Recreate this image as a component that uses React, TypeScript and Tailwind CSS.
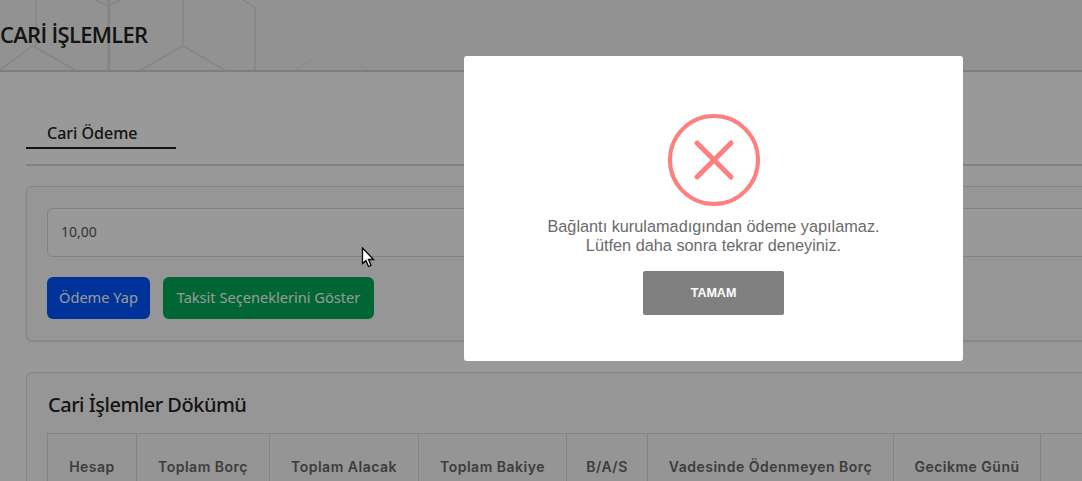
export default function App() {
  const heads: [string, string][] = [
    ["Hesap", "w-[89px]"],
    ["Toplam Borç", "w-[133px]"],
    ["Toplam Alacak", "w-[149px]"],
    ["Toplam Bakiye", "w-[148px]"],
    ["B/A/S", "w-[81px]"],
    ["Vadesinde Ödenmeyen Borç", "w-[246px]"],
    ["Gecikme Günü", "w-[147px]"],
  ];
  return (
    <div className="relative h-[481px] w-[1082px] overflow-hidden bg-white font-['Noto_Sans',sans-serif]">
      <header className="relative flex h-[72px] items-center border-b-2 border-[#d2d2d2] bg-[#f4f4f4] pb-[3px]">
        <svg className="absolute inset-0 h-[70px] w-[500px]" viewBox="0 0 500 70" fill="none" stroke="#dedede" strokeWidth="1.5">
          <path d="M0 70L33 46L75 70M36 0V46M108 0V70M109.5 0V70M183 0V46L141 70M183 46L225 70M243 0L255 8V70M95 0L108 6L120 0" />
          <path d="M295 70L312 60M356 60L366 70" stroke="#ebebeb" />
        </svg>
        <h1 className="relative text-[22px] leading-none font-semibold tracking-[-0.7px] text-[#222] font-['Open_Sans',sans-serif]">CARİ İŞLEMLER</h1>
      </header>
      <main className="pl-[26px]">
        <div className="mt-[49px] w-[1056px] border-b-2 border-[#d6d6d6] pb-[15px]">
          <div className="w-[150px] border-b-2 border-[#222] pb-[1px] pl-[21px] text-[16px] leading-[25px] font-medium text-[#222]">Cari Ödeme</div>
        </div>
        <section className="mt-[20px] h-[155px] w-[1100px] rounded-md border border-[#dedede] bg-[#fbfbfb] px-[20px] pt-[21px] shadow-sm">
          <div className="flex h-[49px] items-center rounded-md border border-[#d8d8d8] bg-white pb-[2px] pl-[13px] text-[14px] text-[#555]">10,00</div>
          <div className="mt-[20px] flex gap-[13px]">
            <button className="h-[42px] w-[103px] rounded-md bg-[#0055ff] text-[14.6px] text-white">Ödeme Yap</button>
            <button className="h-[42px] w-[211px] rounded-md bg-[#00aa55] text-[14.6px] text-white">Taksit Seçeneklerini Göster</button>
          </div>
        </section>
        <section className="mt-[31px] w-[1100px] rounded-md border border-[#dedede] bg-[#fbfbfb] px-[20px] pt-[18px]">
          <h2 className="pl-[1px] text-[20px] leading-[28px] font-medium tracking-[-0.5px] text-[#222]">Cari İşlemler Dökümü</h2>
          <div className="mt-[14px] flex h-[80px] border-t border-l border-[#dcdcdc] bg-[#f8f8f8]">
            {heads.map(([t, w]) => (
              <div key={t} className={`${w} border-r border-[#dcdcdc] pt-[22px] text-center font-['Inter',sans-serif] text-[14px] font-semibold tracking-[0.5px] text-[#666]`}>{t}</div>
            ))}
          </div>
        </section>
      </main>
      <div className="absolute inset-0 bg-black/40" />
      <div className="absolute top-[56px] left-[464px] flex h-[305px] w-[499px] flex-col items-center rounded-[3px] bg-white pt-[58px] font-['Liberation_Sans',sans-serif]">
        <svg width="92" height="92" viewBox="0 0 92 92" fill="none" stroke="#ff7f7f" strokeLinecap="round">
          <circle cx="46" cy="46" r="44" strokeWidth="4" />
          <path d="M29 29L63 63M63 29L29 63" strokeWidth="5" />
        </svg>
        <p className="mt-[11px] text-center text-[16.3px] leading-[19px] text-[#6a6a6a]">
          Bağlantı kurulamadıgından ödeme yapılamaz.<br />Lütfen daha sonra tekrar deneyiniz.
        </p>
        <button className="mt-[16px] h-[44px] w-[141px] rounded-[2px] bg-[#808080] text-[12.5px] font-bold text-white">TAMAM</button>
      </div>
      <svg className="absolute top-[247px] left-[361px]" width="15" height="21" viewBox="0 0 15 21">
        <path d="M1.5 1V16.5L5 13.5L7.5 19.5L10 18.5L7.5 12.5H12.5Z" fill="#fff" stroke="#000" strokeWidth="1.3" />
      </svg>
    </div>
  );
}
